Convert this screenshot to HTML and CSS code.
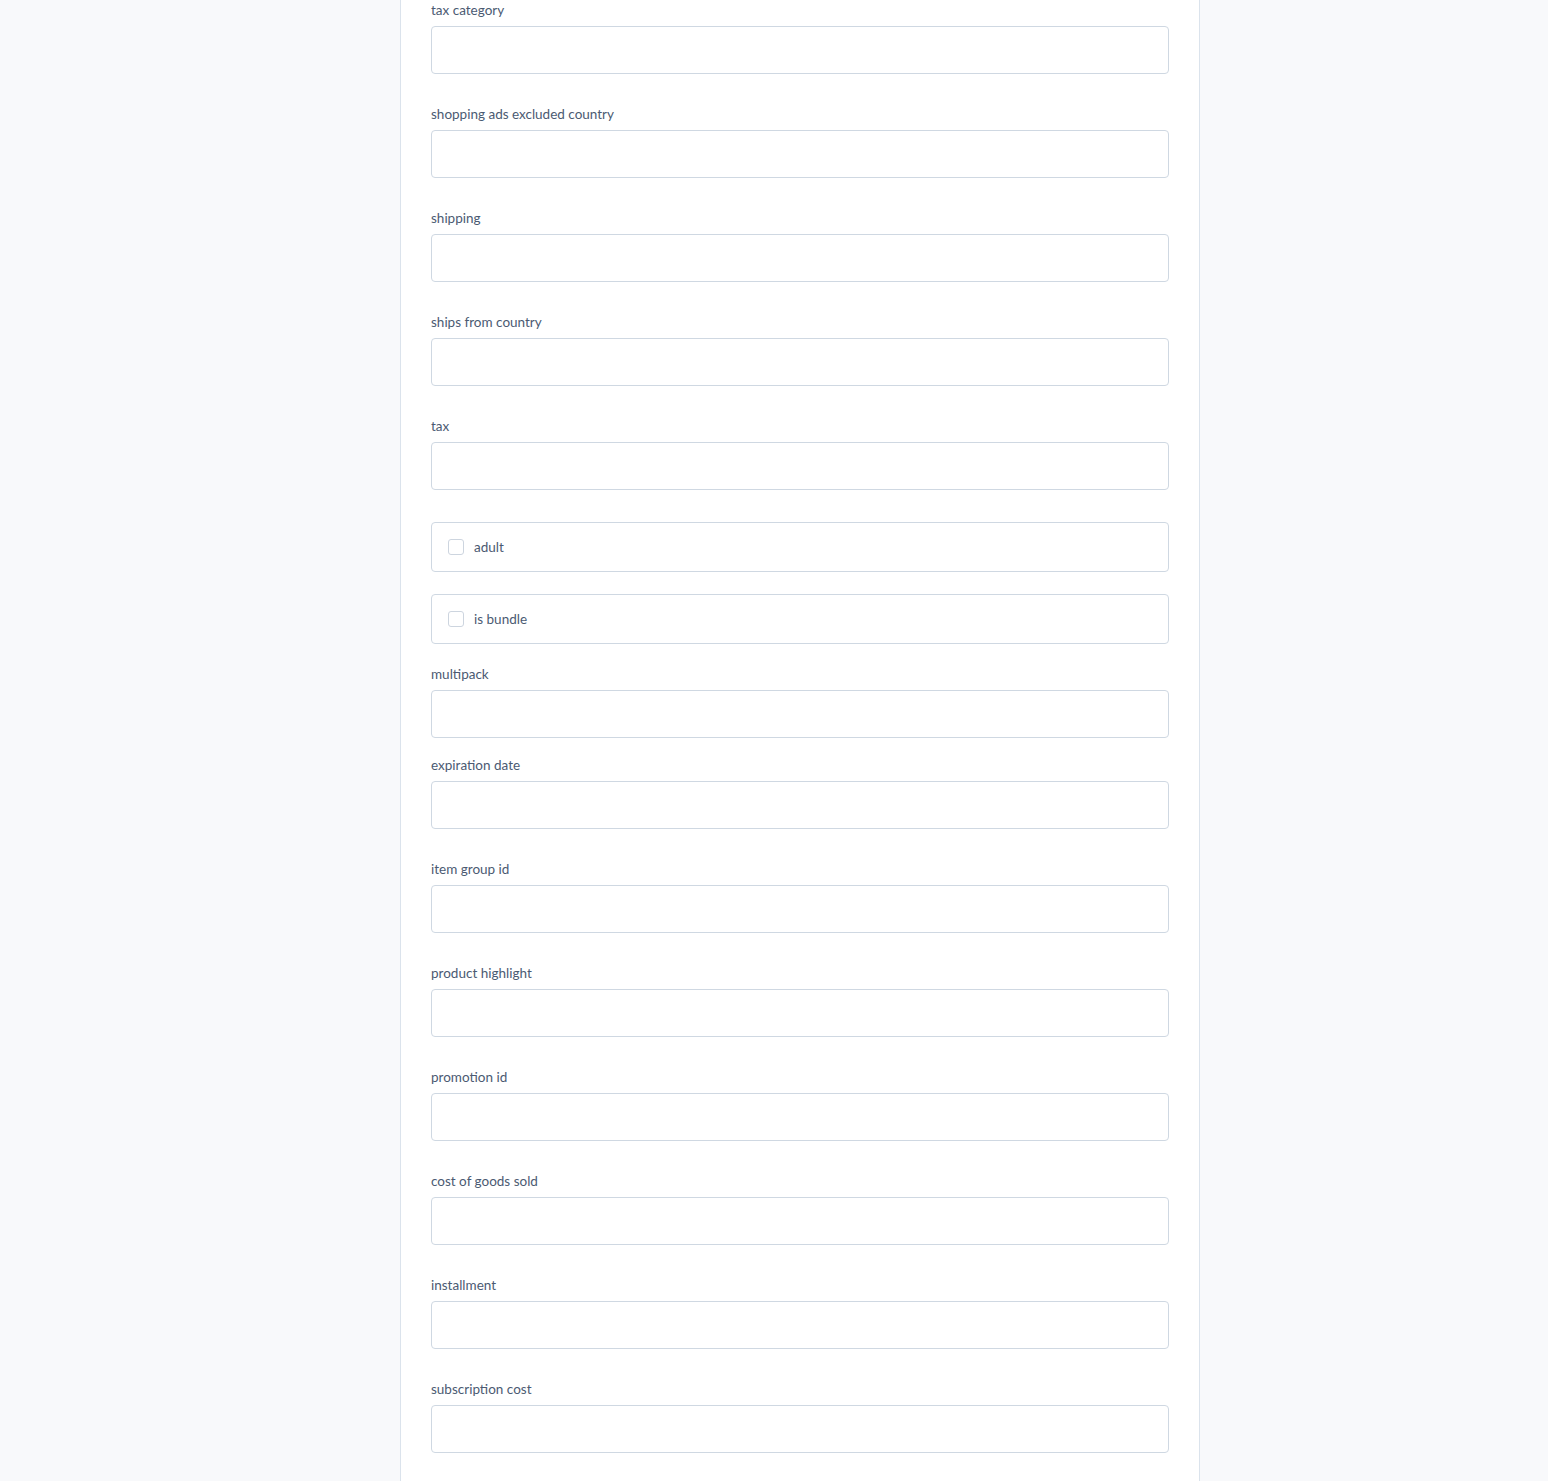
FILE: index.html
```html
<!DOCTYPE html>
<html lang="en">
<head>
<meta charset="utf-8">
<title>Product form</title>
<link rel="stylesheet" href="styles.css">
</head>
<body>
<main class="panel">
  <div class="field"><label class="label">tax category</label><input class="input" type="text"></div>
  <div class="field"><label class="label">shopping ads excluded country</label><input class="input" type="text"></div>
  <div class="field"><label class="label">shipping</label><input class="input" type="text"></div>
  <div class="field"><label class="label">ships from country</label><input class="input" type="text"></div>
  <div class="field"><label class="label">tax</label><input class="input" type="text"></div>
  <label class="check check-first"><span class="box"></span><span class="check-text">adult</span></label>
  <label class="check"><span class="box"></span><span class="check-text">is bundle</span></label>
  <div class="field field-tight"><label class="label">multipack</label><input class="input" type="text"></div>
  <div class="field"><label class="label">expiration date</label><input class="input" type="text"></div>
  <div class="field"><label class="label">item group id</label><input class="input" type="text"></div>
  <div class="field"><label class="label">product highlight</label><input class="input" type="text"></div>
  <div class="field"><label class="label">promotion id</label><input class="input" type="text"></div>
  <div class="field"><label class="label">cost of goods sold</label><input class="input" type="text"></div>
  <div class="field"><label class="label">installment</label><input class="input" type="text"></div>
  <div class="field"><label class="label">subscription cost</label><input class="input" type="text"></div>
</main>
</body>
</html>
```
FILE: styles.css
```css
html, body {
  margin: 0;
  padding: 0;
  background: #f8f9fb;
  font-family: "Lato", "Noto Sans", sans-serif;
  color: #4b5a72;
}

.panel {
  box-sizing: border-box;
  width: 800px;
  margin: 0 0 0 400px;
  min-height: 1481px;
  background: #ffffff;
  border-left: 1px solid #dbe3ec;
  border-right: 1px solid #dbe3ec;
  padding: 0 30px 28px;
  display: flex;
  flex-direction: column;
}

.field {
  display: flex;
  flex-direction: column;
  margin-bottom: 30px;
}

.field-tight {
  margin-bottom: 17px;
}

.label {
  display: block;
  height: 20px;
  line-height: 20px;
  font-size: 13.5px;
  margin-bottom: 6px;
  color: #4b5a72;
}

.input {
  box-sizing: border-box;
  height: 48px;
  width: 100%;
  margin: 0;
  border: 1px solid #cfd8e2;
  border-radius: 4px;
  background: #ffffff;
  padding: 0 12px;
  font: inherit;
  outline: none;
}

.check {
  box-sizing: border-box;
  height: 50px;
  display: flex;
  align-items: center;
  gap: 10px;
  padding: 0 0 0 16px;
  border: 1px solid #cfd8e2;
  border-radius: 4px;
  margin-bottom: 22px;
  font-size: 13.5px;
  color: #4b5a72;
}

.check-first {
  margin-top: 2px;
}

.check + .field {
  margin-top: -2px;
}

.box {
  box-sizing: border-box;
  width: 16px;
  height: 16px;
  border: 1px solid #cdd5df;
  border-radius: 3px;
  background: #fff;
  flex: none;
}
```
